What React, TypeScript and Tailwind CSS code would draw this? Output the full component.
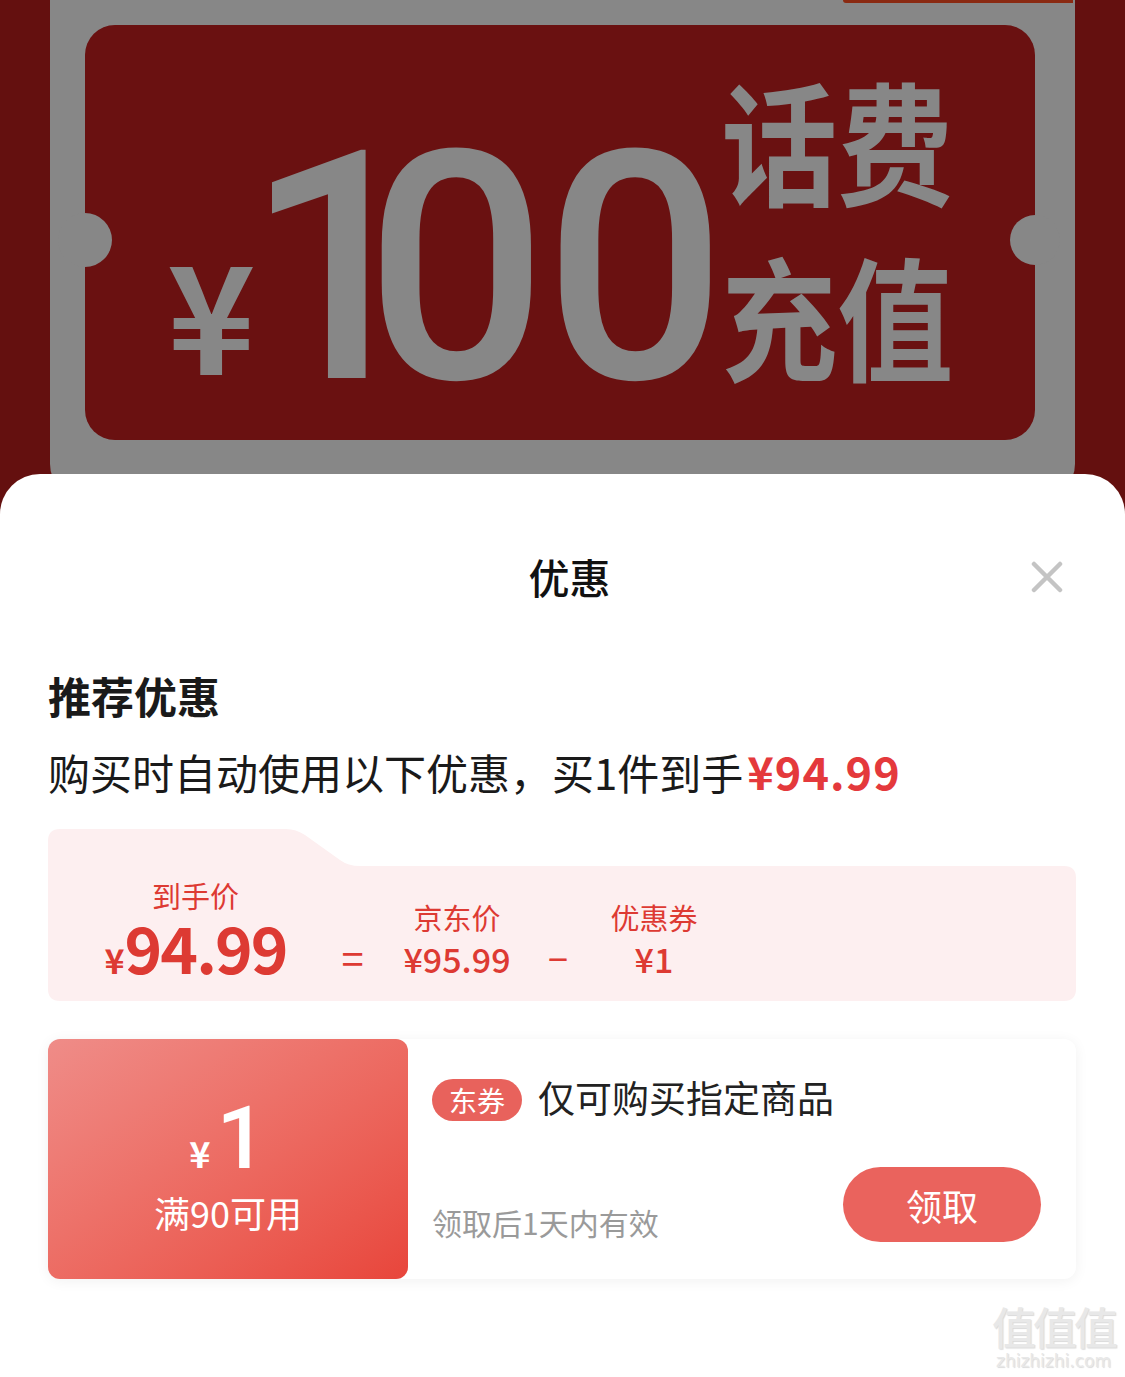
import React from "react";

const F = { fontFamily: '"Noto Sans CJK SC", "Noto Sans", sans-serif' };
const R = { fontFamily: 'Roboto, "Noto Sans", sans-serif' };

function Banner() {
  return (
    <div className="relative h-[520px] overflow-hidden bg-[#64100f]">
      <div className="ml-[50px] h-[500px] w-[1025px] rounded-b-[36px] bg-[#878787] pl-[35px] pt-[25px]">
        <div className="relative flex h-[415px] w-[950px] items-start rounded-[30px] bg-[#6a1111] pl-[82px] text-[#878787]">
          <div className="absolute left-[-27px] top-[188px] h-[54px] w-[54px] rounded-full bg-[#878787]" />
          <div className="absolute right-[-25px] top-[190px] h-[50px] w-[50px] rounded-full bg-[#878787]" />
          <span className="mt-[210px] shrink-0 text-[150px] font-bold leading-none">¥</span>
          <div className="ml-[-10px] mt-[84px] flex shrink-0 whitespace-nowrap text-[320px] font-medium leading-none" style={R}>
            <span>1</span>
            <span className="ml-[-62px] tracking-[-3px]">00</span>
          </div>
          <div className="ml-[-2px] mt-[25px] flex shrink-0 origin-top scale-y-[1.15] flex-col whitespace-nowrap text-[116px] font-bold leading-[152px]">
            <span>话费</span>
            <span>充值</span>
          </div>
        </div>
      </div>
      <div className="absolute left-[843px] top-0 h-[3px] w-[230px] rounded-bl-[4px] bg-[#8a2a12]" />
    </div>
  );
}

function CloseIcon() {
  return (
    <svg width="32" height="32" viewBox="0 0 32 32" className="absolute right-[62px] top-[87px]">
      <path d="M3 3 L29 29 M29 3 L3 29" stroke="#c4c4c4" strokeWidth="4.5" strokeLinecap="round" />
    </svg>
  );
}

function PriceBox() {
  return (
    <div className="relative mt-[31px] h-[172px] w-[1028px]">
      <svg className="absolute inset-0" width="1028" height="172" viewBox="0 0 1028 172">
        <path
          d="M0 12 Q0 0 12 0 H238 Q248 0 257 6 L292 31 Q300 37 312 37 H1016 Q1028 37 1028 49 V160 Q1028 172 1016 172 H12 Q0 172 0 160 Z"
          fill="#fdeff0"
        />
      </svg>
      <div className="relative flex h-full items-end pb-[22px] pl-[69px] text-[#dd3a33]">
        <div className="flex w-[157px] flex-col items-center">
          <span className="text-[29px] leading-[40px]">到手价</span>
          <div className="mt-[-2px] flex items-baseline whitespace-nowrap font-bold">
            <span className="text-[34px] leading-none">¥</span>
            <span className="text-[64px] leading-[66px] tracking-[-2px]">94.99</span>
          </div>
        </div>
        <div className="flex w-[131px] justify-center pb-[2px] pl-[26px] text-[40px] leading-[40px]">=</div>
        <div className="flex w-[104px] flex-col items-center">
          <span className="text-[29px] leading-[40px]">京东价</span>
          <span className="mt-[2px] whitespace-nowrap text-[34px] font-medium leading-[40px]">¥95.99</span>
        </div>
        <div className="flex w-[98px] justify-center pb-[2px] text-[36px] leading-[40px]">−</div>
        <div className="flex w-[94px] flex-col items-center">
          <span className="text-[29px] leading-[40px]">优惠券</span>
          <span className="mt-[2px] whitespace-nowrap text-[34px] font-medium leading-[40px]">¥1</span>
        </div>
      </div>
    </div>
  );
}

function Coupon() {
  return (
    <div className="mt-[38px] flex h-[240px] w-[1028px] rounded-[12px] bg-white shadow-[0_2px_14px_rgba(0,0,0,0.06)]">
      <div className="flex w-[360px] flex-col items-center justify-center rounded-[12px] bg-gradient-to-br from-[#ef8c88] to-[#e8453b] text-white">
        <div className="mt-[10px] flex items-baseline">
          <span className="text-[36px] font-bold leading-none">¥</span>
          <span className="ml-[6px] text-[88px] font-medium leading-[86px]" style={R}>1</span>
        </div>
        <span className="mt-[9px] text-[36px] leading-[44px]">满90可用</span>
      </div>
      <div className="flex flex-1 flex-col pl-[24px] pr-[35px] pt-[36px]">
        <div className="flex items-center">
          <span className="flex h-[42px] items-center rounded-full bg-[#e8625c] px-[17px] text-[28px] leading-none text-white">东券</span>
          <span className="mb-[6px] ml-[16px] text-[37px] leading-[44px] text-[#222]">仅可购买指定商品</span>
        </div>
        <div className="mt-[42px] flex items-end justify-between">
          <span className="text-[30px] leading-[40px] text-[#9a9a9a]">领取后1天内有效</span>
          <span className="flex h-[75px] w-[198px] items-center justify-center rounded-full bg-[#ea635d] text-[36px] leading-none text-white">领取</span>
        </div>
      </div>
    </div>
  );
}

function Watermark() {
  return (
    <div className="absolute bottom-[6px] right-[10px] flex flex-col items-center text-[#e8e8e8] [text-shadow:1px_1px_1px_rgba(0,0,0,0.15)]">
      <span className="text-[44px] font-medium leading-[50px] tracking-[-3px]">值值值</span>
      <span className="text-[17px] leading-[20px]" style={{ fontFamily: '"DejaVu Sans", sans-serif' }}>zhizhizhi.com</span>
    </div>
  );
}

export default function App() {
  return (
    <div className="w-[1125px] overflow-hidden bg-white" style={F}>
      <Banner />
      <div className="relative -mt-[46px] h-[903px] rounded-t-[40px] bg-white px-[48px]">
        <div className="pl-[14px] pt-[80px] text-center text-[41px] font-medium leading-[44px] text-[#111]">优惠</div>
        <CloseIcon />
        <div className="mt-[71px] text-[43px] font-bold leading-[52px] text-[#1a1a1a]">推荐优惠</div>
        <div className="mt-[24px] flex items-baseline text-[42px] leading-[52px] text-[#1a1a1a]">
          <span>购买时自动使用以下优惠，买1件到手</span>
          <span className="ml-[4px] text-[45px] font-bold tracking-[1px] text-[#e4393c]">¥94.99</span>
        </div>
        <PriceBox />
        <Coupon />
        <Watermark />
      </div>
    </div>
  );
}
